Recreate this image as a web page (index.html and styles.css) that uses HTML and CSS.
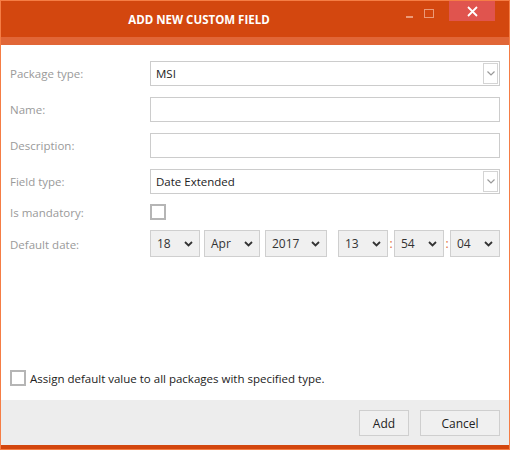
FILE: index.html
```html
<!DOCTYPE html>
<html lang="en">

<head>
    <meta charset="UTF-8">
    <title>Add New Custom Field</title>
    <link rel="stylesheet" href="styles.css">
</head>

<body>
    <div class="window">
        <div class="titlebar">
            <div class="title">ADD NEW CUSTOM FIELD</div>
            <div class="win-buttons">
                <span class="win-min"></span>
                <span class="win-max"></span>
                <span class="win-close">
                    <svg width="11" height="11" viewBox="0 0 11 11">
                        <path d="M1 1 L10 10 M10 1 L1 10" stroke="#fff" stroke-width="1.8" fill="none" />
                    </svg>
                </span>
            </div>
        </div>
        <div class="stripe"></div>

        <div class="content">
            <div class="form">
                <label class="label">Package type:</label>
                <div class="field dropdown">
                    <span class="value">MSI</span>
                    <span class="drop-btn">
                        <svg width="8" height="5" viewBox="0 0 8 5"><path d="M0.5 0.5 L4 4 L7.5 0.5" stroke="#999" stroke-width="1.2" fill="none" /></svg>
                    </span>
                </div>

                <label class="label">Name:</label>
                <div class="field"></div>

                <label class="label">Description:</label>
                <div class="field"></div>

                <label class="label">Field type:</label>
                <div class="field dropdown">
                    <span class="value">Date Extended</span>
                    <span class="drop-btn">
                        <svg width="8" height="5" viewBox="0 0 8 5"><path d="M0.5 0.5 L4 4 L7.5 0.5" stroke="#999" stroke-width="1.2" fill="none" /></svg>
                    </span>
                </div>

                <label class="label">Is mandatory:</label>
                <div class="check-row"><span class="checkbox"></span></div>

                <label class="label">Default date:</label>
                <div class="date-row">
                    <div class="picker w-day"><span>18</span><svg class="chev" width="9" height="6" viewBox="0 0 9 6"><path d="M1 1 L4.5 4.5 L8 1" stroke="#333" stroke-width="1.8" fill="none" /></svg></div>
                    <div class="picker w-month"><span>Apr</span><svg class="chev" width="9" height="6" viewBox="0 0 9 6"><path d="M1 1 L4.5 4.5 L8 1" stroke="#333" stroke-width="1.8" fill="none" /></svg></div>
                    <div class="picker w-year"><span>2017</span><svg class="chev" width="9" height="6" viewBox="0 0 9 6"><path d="M1 1 L4.5 4.5 L8 1" stroke="#333" stroke-width="1.8" fill="none" /></svg></div>
                    <div class="time">
                        <div class="picker w-time"><span>13</span><svg class="chev" width="9" height="6" viewBox="0 0 9 6"><path d="M1 1 L4.5 4.5 L8 1" stroke="#333" stroke-width="1.8" fill="none" /></svg></div>
                        <span class="colon">:</span>
                        <div class="picker w-time"><span>54</span><svg class="chev" width="9" height="6" viewBox="0 0 9 6"><path d="M1 1 L4.5 4.5 L8 1" stroke="#333" stroke-width="1.8" fill="none" /></svg></div>
                        <span class="colon">:</span>
                        <div class="picker w-time"><span>04</span><svg class="chev" width="9" height="6" viewBox="0 0 9 6"><path d="M1 1 L4.5 4.5 L8 1" stroke="#333" stroke-width="1.8" fill="none" /></svg></div>
                    </div>
                </div>
            </div>

            <div class="assign">
                <span class="checkbox"></span>
                <span class="assign-text">Assign default value to all packages with specified type.</span>
            </div>
        </div>

        <div class="footer">
            <button class="btn btn-add">Add</button>
            <button class="btn btn-cancel">Cancel</button>
        </div>
        <div class="bottom-bar"></div>
    </div>
</body>

</html>
```

FILE: styles.css
```css
* {
    box-sizing: border-box;
}

body {
    margin: 0;
    font-family: "Open Sans", "Noto Sans", sans-serif;
    font-size: 12px;
    background: #fff;
}

.window {
    width: 510px;
    height: 450px;
    border: 1px solid #f57d45;
    display: flex;
    flex-direction: column;
    background: #fff;
}

.titlebar {
    height: 36px;
    background: #d3470f;
    position: relative;
    display: flex;
    align-items: center;
    justify-content: center;
    padding-right: 112px;
}

.title {
    color: #fff;
    font-weight: bold;
    font-size: 11.5px;
    margin-top: 0;
}

.win-buttons {
    position: absolute;
    top: 0;
    right: 14px;
    display: flex;
    align-items: flex-start;
}

.win-min {
    width: 7px;
    height: 2px;
    background: #eb9a78;
    margin-top: 15px;
    margin-right: 11px;
}

.win-max {
    width: 10px;
    height: 9px;
    border: 1px solid #eb9a78;
    margin-top: 8px;
    margin-right: 15px;
}

.win-close {
    width: 46px;
    height: 20px;
    background: #e0544e;
    display: flex;
    align-items: center;
    justify-content: center;
}

.stripe {
    height: 8px;
    background: #e16637;
}

.content {
    flex: 1;
    padding: 16px 9px 0 9px;
    display: flex;
    flex-direction: column;
}

.form {
    display: grid;
    grid-template-columns: 140px 1fr;
    row-gap: 11px;
    align-items: center;
}

.label {
    color: #9a9a9a;
    font-size: 11.5px;
}

.field {
    height: 25px;
    border: 1px solid #cccccc;
    background: #fff;
    display: flex;
    align-items: center;
    padding-left: 5px;
    color: #222;
    font-size: 11.5px;
}

.dropdown .value {
    flex: 1;
}

.drop-btn {
    width: 15px;
    height: 21px;
    border: 1px solid #d4d4d4;
    margin-right: 1px;
    display: flex;
    align-items: center;
    justify-content: center;
}

.check-row {
    height: 16px;
    margin-top: -1px;
}

.checkbox {
    display: block;
    width: 16px;
    height: 16px;
    border: 2px solid #b5b5b5;
    background: #fff;
}

.date-row {
    display: flex;
    align-items: center;
    margin-top: -1px;
}

.picker {
    height: 27px;
    border: 1px solid #cfcfcf;
    background: #f0f0f0;
    display: flex;
    align-items: center;
    justify-content: space-between;
    padding: 0 6px 0 6px;
    color: #333;
    font-size: 12px;
    margin-right: 4px;
}

.w-day {
    width: 50px;
}

.w-month {
    width: 56px;
    margin-right: 5px;
}

.w-year {
    width: 62px;
    margin-right: 11px;
}

.time {
    display: flex;
    align-items: center;
}

.w-time {
    width: 50px;
    margin-right: 0;
}

.colon {
    color: #e06b3c;
    width: 6px;
    text-align: center;
    font-size: 12px;
}

.assign {
    margin-top: auto;
    margin-bottom: 14px;
    display: flex;
    align-items: center;
    gap: 4px;
    padding-left: 0;
}

.assign .checkbox {
    border-width: 2px;
}

.assign-text {
    color: #222;
    font-size: 11.5px;
}

.footer {
    height: 45px;
    background: #ededed;
    display: flex;
    justify-content: flex-end;
    align-items: flex-start;
    padding: 10px 9px 0 0;
    gap: 11px;
}

.btn {
    height: 26px;
    border: 1px solid #cfcfcf;
    background: #f0f0f0;
    color: #222;
    font-family: "Open Sans", "Noto Sans", sans-serif;
    font-size: 12px;
    padding: 0;
}

.btn-add {
    width: 50px;
}

.btn-cancel {
    width: 80px;
}

.bottom-bar {
    height: 4px;
    background: #d3470f;
}
```
